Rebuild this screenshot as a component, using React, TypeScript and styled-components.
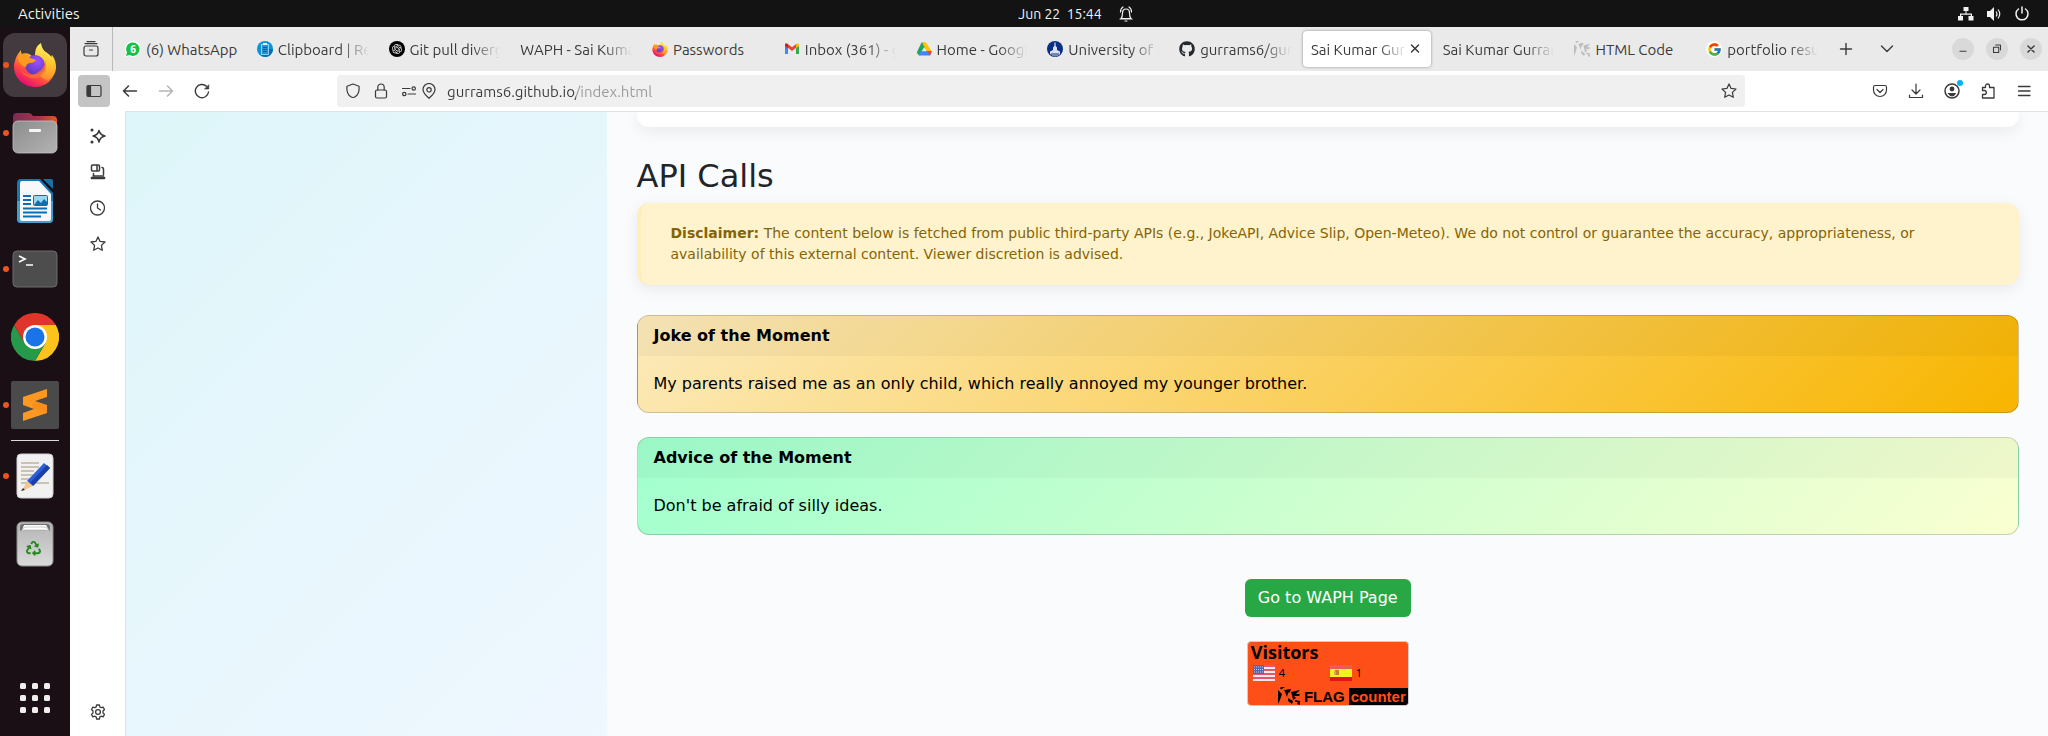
import React from "react";
import styled, { createGlobalStyle, css } from "styled-components";
import { FcGoogle } from "react-icons/fc";
import { FaGithub, FaRecycle } from "react-icons/fa";
import { RiOpenaiFill } from "react-icons/ri";

const uiFont = `"Ubuntu", "Noto Sans", "Open Sans", sans-serif`;
const pageFont = `"DejaVu Sans", sans-serif`;

const GlobalStyle = createGlobalStyle`
  * { box-sizing: border-box; }
  body { margin: 0; background: #ffffff; }
  button { border: 0; padding: 0; background: none; font: inherit; color: inherit; cursor: pointer; }
  svg { display: block; flex: none; }
`;

/* ---------- desktop shell ---------- */

const Desktop = styled.div`
  min-height: 100vh;
  display: flex;
  flex-direction: column;
  font-family: ${uiFont};
  font-size: 15px;
`;

const TopBar = styled.header`
  display: grid;
  grid-template-columns: 1fr auto 1fr;
  align-items: center;
  height: 27px;
  padding: 0 18px;
  background: #131313;
  color: #f2f2f2;
`;

const Clock = styled.button`
  display: flex;
  align-items: center;
  gap: 16px;
  margin-left: 104px;
  font-size: 14px;
  white-space: pre;
`;

const Activities = styled.button`
  justify-self: start;
`;

const Tray = styled.div`
  display: flex;
  justify-content: flex-end;
  align-items: center;
  gap: 12px;
`;

const Workspace = styled.div`
  flex: 1;
  display: flex;
`;

const Dock = styled.nav`
  width: 70px;
  display: flex;
  flex-direction: column;
  gap: 4px;
  padding: 6px 3px;
  background: #1a0f15;
`;

const DockItem = styled.button<{ $active?: boolean; $running?: boolean }>`
  position: relative;
  display: flex;
  align-items: center;
  justify-content: center;
  height: 64px;
  border-radius: 12px;
  background: ${(p) => (p.$active ? "#433a3f" : "transparent")};
  ${(p) =>
    p.$running &&
    css`
      &::before {
        content: "";
        position: absolute;
        left: 0;
        top: 29px;
        width: 6px;
        height: 6px;
        border-radius: 50%;
        background: #e95420;
      }
    `}
`;

const DockRule = styled.hr`
  width: 48px;
  height: 1px;
  margin: -1px auto;
  border: 0;
  background: #dcd9da;
`;

const DockSpacer = styled.div`
  flex: 1;
`;

/* ---------- browser ---------- */

const Browser = styled.div`
  flex: 1;
  min-width: 0;
  display: flex;
  flex-direction: column;
  background: #ffffff;
  color: #3a3a3a;
`;

const TabBar = styled.div`
  display: flex;
  align-items: center;
  height: 44px;
  background: #eaeaea;
`;

const TabOverview = styled.button`
  display: flex;
  align-items: center;
  justify-content: center;
  width: 43px;
  height: 44px;
  border-right: 1px solid #b9b9b9;
`;

const TabList = styled.div`
  flex: 1;
  min-width: 0;
  display: flex;
  gap: 4px;
  padding: 0 4px;
`;

const TabBox = styled.div<{ $active?: boolean }>`
  flex: 1 1 0;
  min-width: 0;
  display: flex;
  align-items: center;
  height: 36px;
  padding: 0 8px;
  border-radius: 4px;
  ${(p) =>
    p.$active &&
    css`
      background: #ffffff;
      box-shadow: 0 0 3px rgba(0, 0, 0, 0.4);
    `}
`;

const TabButton = styled.button<{ $fade?: boolean }>`
  flex: 1;
  min-width: 0;
  display: flex;
  align-items: center;
  gap: 5px;
  white-space: nowrap;
  text-align: left;
  overflow: hidden;
  ${(p) => p.$fade && css`mask-image: linear-gradient(to left, transparent, #000 28px);`}
`;

const WindowControls = styled.div`
  display: flex;
  align-items: center;
  gap: 12px;
  padding-right: 6px;
`;

const TabTools = styled.div`
  display: flex;
  align-items: center;
  gap: 9px;
  margin-right: 49px;
`;

const RoundButton = styled.button`
  display: flex;
  align-items: center;
  justify-content: center;
  width: 22px;
  height: 22px;
  border-radius: 50%;
  background: #d9d9d9;
`;

const IconButton = styled.button<{ $pressed?: boolean }>`
  position: relative;
  display: flex;
  align-items: center;
  justify-content: center;
  width: 32px;
  height: 32px;
  border-radius: 4px;
  background: ${(p) => (p.$pressed ? "#c4c4c4" : "transparent")};

  &:disabled {
    color: #b4b4b4;
  }
`;

const Toolbar = styled.div`
  display: flex;
  align-items: center;
  gap: 4px;
  height: 40px;
  padding: 0 8px;
`;

const AddressBar = styled.form`
  flex: 1;
  display: flex;
  align-items: center;
  height: 32px;
  margin: 0 115px;
  padding: 0 8px;
  border-radius: 4px;
  background: #f0f0f0;
`;

const AddressIcons = styled.div`
  display: flex;
  align-items: center;
  gap: 12px;
  margin-right: 10px;
`;

const PermissionIcons = styled.div`
  display: flex;
  gap: 4px;
`;

const AddressInput = styled.input`
  flex: 1;
  min-width: 0;
  padding: 0;
  border: 0;
  outline: 0;
  font: inherit;
  color: transparent;
  background: linear-gradient(to right, #3a3a3a 129px, #999999 129px);
  background-clip: text;
  -webkit-background-clip: text;
`;

const Badge = styled.span`
  position: absolute;
  top: 5px;
  right: 5px;
  width: 6px;
  height: 6px;
  border-radius: 50%;
  background: #00b3f4;
`;

const BrowserBody = styled.div`
  flex: 1;
  display: flex;
`;

const Sidebar = styled.nav`
  width: 55px;
  display: flex;
  flex-direction: column;
  align-items: center;
  gap: 4px;
  padding: 9px 0 8px 1px;
`;

const SidebarSpacer = styled.div`
  flex: 1;
`;

/* ---------- web page ---------- */

const Page = styled.div`
  flex: 1;
  min-width: 0;
  display: flex;
  overflow: hidden;
  border-top: 1px solid #e0e2e4;
  border-left: 1px solid #e0e2e4;
  background: #fafbfd;
  font-family: ${pageFont};
  font-size: 16px;
  line-height: 24px;
  color: #212529;
`;

const Profile = styled.aside`
  flex: 0 0 25%;
  background: linear-gradient(135deg, #def6f9, #eff7ff);
`;

const Content = styled.main`
  flex: 1;
  min-width: 0;
  padding: 0 29px 30px 30px;
`;

const PanelEnd = styled.section`
  height: 15px;
  margin-bottom: 30px;
  border-radius: 0 0 12px 12px;
  background: #ffffff;
  box-shadow: 0 4px 16px rgba(0, 0, 0, 0.08);
`;

const Heading = styled.h2`
  margin: 0 0 8px;
  font-size: 32px;
  font-weight: 400;
  line-height: 38px;
`;

const Disclaimer = styled.p`
  margin: 0 0 30px;
  padding: 20px 30px;
  border-left: 4px solid #ffeeba;
  border-radius: 12px;
  background: #fff3cd;
  box-shadow: 0 4px 16px rgba(0, 0, 0, 0.08);
  color: #856404;
  font-size: 14px;
  line-height: 21px;
`;

const Card = styled.article<{ $from: string; $to: string }>`
  margin-bottom: 24px;
  border: 1px solid rgba(0, 0, 0, 0.18);
  border-radius: 12px;
  overflow: hidden;
  background: linear-gradient(135deg, ${(p) => p.$from}, ${(p) => p.$to});
  color: #000000;
`;

const CardTitle = styled.h3`
  margin: 0;
  padding: 8px 16px;
  background: rgba(0, 0, 0, 0.03);
  font-size: 16px;
  font-weight: 700;
`;

const CardText = styled.p`
  margin: 0;
  padding: 16px;
`;

const Actions = styled.div`
  display: flex;
  flex-direction: column;
  align-items: center;
  gap: 24px;
  padding-top: 20px;
`;

const PageLink = styled.a`
  padding: 7px 13px;
  border-radius: 6px;
  background: #28a745;
  color: #ffffff;
  text-decoration: none;
`;

const Counter = styled.a`
  display: flex;
  flex-direction: column;
  width: 162px;
  height: 65px;
  border: 1px solid #c9ccd0;
  border-radius: 4px;
  overflow: hidden;
  background: #ff4f19;
  color: #000000;
  text-decoration: none;
  font-family: "Noto Sans", sans-serif;
`;

const CounterTitle = styled.strong`
  padding-left: 3px;
  font-family: "Open Sans", sans-serif;
  font-size: 18px;
  line-height: 20px;
`;

const CounterRow = styled.span`
  display: grid;
  grid-template-columns: 77px 1fr;
  padding: 2px 5px 0;
`;

const Country = styled.span`
  display: flex;
  align-items: center;
  gap: 4px;
  font-size: 11px;
  line-height: 18px;
`;

const CounterBrand = styled.span`
  display: flex;
  align-items: center;
  justify-content: flex-end;
  gap: 4px;
  margin-top: auto;
  font-family: "Liberation Sans", sans-serif;
  font-size: 15px;
  font-weight: 700;
  line-height: 17px;
`;

const CounterWord = styled.span`
  padding: 0 2px;
  background: #000000;
  color: #ff4f19;
`;

/* ---------- icons ---------- */

type IconProps = { children: React.ReactNode; size?: number; width?: number };

const Line = ({ children, size = 16, width = 1.2 }: IconProps) => (
  <svg width={size} height={size} viewBox="0 0 16 16" fill="none" stroke="currentColor" strokeWidth={width} strokeLinecap="round" strokeLinejoin="round" aria-hidden="true">
    {children}
  </svg>
);

const starPath = "M8 .9l2.1 4.5 4.9.6-3.6 3.4.9 4.9L8 12l-4.3 2.3.9-4.9L1 6l4.9-.6z";

const FirefoxIcon = ({ size, id }: { size: number; id: string }) => (
  <svg width={size} height={size} viewBox="0 0 42 44" aria-hidden="true">
    <defs>
      <linearGradient id={`${id}a`} x1=".85" y1=".1" x2=".25" y2="1">
        <stop offset="0" stopColor="#fff44f" />
        <stop offset=".35" stopColor="#ffa62a" />
        <stop offset=".65" stopColor="#ff4a41" />
        <stop offset="1" stopColor="#e2007e" />
      </linearGradient>
      <linearGradient id={`${id}b`} x1=".6" y1="0" x2=".5" y2="1">
        <stop offset="0" stopColor="#fff36a" />
        <stop offset=".55" stopColor="#ffc52c" />
        <stop offset="1" stopColor="#ff8a2c" />
      </linearGradient>
      <radialGradient id={`${id}c`} cx=".6" cy=".3" r=".8">
        <stop offset="0" stopColor="#9a52ff" />
        <stop offset="1" stopColor="#5b35b5" />
      </radialGradient>
    </defs>
    <path d="M1 18C2 13 4 11 7 7c0 2 0 3 1 4 2-1 5-1 7 0 2 1 4 3 5 3l10-6c6 3 11 9 11 17 0 11-9 19-20 19S0 35 0 24c0-2 0-4 1-6z" fill={`url(#${id}a)`} />
    <path d="M21 14c0-7 1-11 6-14 1 7 5 9 8 13 0 2 1 3 3 4-1-2-1-4 0-5 3 4 4 8 4 12 0 6-3 10-8 13-8-1-13-9-13-23z" fill={`url(#${id}b)`} />
    <circle cx="21" cy="22" r="10" fill={`url(#${id}c)`} />
    <path d="M31 17c3 8-1 16-9 18-6 1-12-2-15-7 4 4 11 5 16 2s8-7 8-13z" fill="#ff6a35" opacity=".8" />
    <path d="M8 11c3-1 6 0 8 4l6 2c-1 2-3 3-6 3-2 0-4 2-4 4-4-1-7-4-8-8 0-3 2-5 4-5z" fill="#ff9a1f" />
  </svg>
);

const FilesIcon = () => (
  <svg width="46" height="42" viewBox="0 0 46 42" aria-hidden="true">
    <defs>
      <linearGradient id="filesTop"><stop offset="0" stopColor="#7c2a55" /><stop offset=".6" stopColor="#a5364b" /><stop offset="1" stopColor="#e95420" /></linearGradient>
      <linearGradient id="filesBody" x2="1" y2="1"><stop offset="0" stopColor="#8c8c8c" /><stop offset="1" stopColor="#b3b3b3" /></linearGradient>
    </defs>
    <path d="M1 5q0-4 4-4h12q2 0 4 3h20q4 0 4 4v12H1z" fill="url(#filesTop)" />
    <rect x="1" y="9" width="44" height="32" rx="5" fill="url(#filesBody)" stroke="#c4c4c4" strokeWidth=".8" />
    <rect x="17" y="17" width="12" height="3" rx="1" fill="#f6f6f6" />
  </svg>
);

const WriterIcon = () => (
  <svg width="38" height="46" viewBox="0 0 38 46" aria-hidden="true">
    <path d="M5 1h19l13 14v26q0 4-4 4H5q-4 0-4-4V5q0-4 4-4z" fill="#1378b5" />
    <path d="M1 23h36v18q0 4-4 4H5q-4 0-4-4z" fill="#3f9fd0" />
    <path d="M6 3h17l12 13v25q0 2-2 2H6q-2 0-2-2V5q0-2 2-2z" fill="#f8f8f8" />
    <path d="M27 1h8q2 0 2 2v8z" fill="#1a6fa3" />
    <path d="M7 18h8M7 22h8M7 26h8M7 30.500h24M7 34.500h24M7 38.500h18" stroke="#0a6fb5" strokeWidth="2" />
    <rect x="17.500" y="17.500" width="14" height="10" rx="1" fill="#9fd3f2" stroke="#0a6fb5" />
    <path d="M18 27l4-5 3 3 3-4 3 3v3z" fill="#0a6fb5" />
  </svg>
);

const TerminalIcon = () => (
  <svg width="46" height="38" viewBox="0 0 46 38" aria-hidden="true">
    <rect x="1" y="1" width="44" height="36" rx="4" fill="#4d4d4d" stroke="#6c6c6c" />
    <path d="M7 6l6 3-6 3M14 15h7" stroke="#fff" strokeWidth="1.700" fill="none" />
  </svg>
);

const ChromeIcon = () => (
  <svg width="48" height="48" viewBox="0 0 48 48" aria-hidden="true">
    <path d="M24 24L3.200 12A24 24 0 0 1 44.800 12z" fill="#e0352b" />
    <path d="M24 12h20.800A24 24 0 0 1 24 48L34.400 30z" fill="#fcc41a" />
    <path d="M3.200 12A24 24 0 0 0 24 48l10.400-18L13.600 30z" fill="#27994a" />
    <path d="M3.200 12L13.600 30 24 24V12z" fill="#e0352b" />
    <circle cx="24" cy="24" r="12" fill="#fff" />
    <circle cx="24" cy="24" r="9.500" fill="#1a73e8" />
  </svg>
);

const SublimeIcon = () => (
  <svg width="48" height="48" viewBox="0 0 48 48" aria-hidden="true">
    <rect width="48" height="48" rx="2" fill="#4a4a4a" />
    <path d="M12 16l24-8v8l-12 4 12 4v8L12 40v-8l11-4-11-4z" fill="#ff9820" />
    <path d="M23 28l13 3v-6l-12-5-3 5z" fill="#e97f10" opacity=".35" />
  </svg>
);

const EditorIcon = () => (
  <svg width="38" height="46" viewBox="0 0 38 46" aria-hidden="true">
    <rect x="1" y="1" width="36" height="44" rx="4" fill="#f1f1f1" stroke="#cfcfcf" />
    <path d="M5 10h18M5 14h18M5 18h13M5 22h12M5 26h12M5 30h28" stroke="#c9c3b4" strokeWidth="2" />
    <path d="M28 10l6 5-17 18-6-5z" fill="#2b5fd9" />
    <path d="M31 12l3 3-17 18-3-3z" fill="#1b3fa8" />
    <path d="M11 28l6 5-11 5z" fill="#f5c58b" />
    <path d="M7 35l2 2-4 1z" fill="#333" />
  </svg>
);

const TrashIcon = () => (
  <svg width="38" height="46" viewBox="0 0 38 46" aria-hidden="true">
    <defs>
      <linearGradient id="trashBody" x2="0" y2="1"><stop offset="0" stopColor="#b4b4b4" /><stop offset="1" stopColor="#dadada" /></linearGradient>
    </defs>
    <rect x="1" y="1" width="36" height="44" rx="5" fill="url(#trashBody)" stroke="#8b908b" />
    <path d="M4 10V6q0-3 3-3h24q3 0 3 3v4l-2-1q-1-2-3-2H9Q7 7 6 9z" fill="#6f6f6f" />
    <path d="M6 9l2-5h22l3 5-3-2H9z" fill="#fdfdfd" />
    <path d="M6 10q1-4 4-4h18q4 0 5 4-2-1-4-1H10q-2 0-4 1z" fill="#ffffff" stroke="#9a9a9a" strokeWidth=".5" />
    <FaRecycle x="10" y="20" width="18" height="18" color="#23891c" />
  </svg>
);

const GridIcon = () => (
  <svg width="30" height="30" viewBox="0 0 30 30" fill="#f0efee" aria-hidden="true">
    {[0, 12, 24].map((y) => [0, 12, 24].map((x) => <rect key={`${x}-${y}`} x={x} y={y} width="6" height="6" rx="1.500" />))}
  </svg>
);

const WhatsAppIcon = () => (
  <svg width="16" height="16" viewBox="0 0 16 16" aria-hidden="true">
    <path d="M0 16l1-4A8 8 0 1 1 4 15z" fill="#fff" />
    <path d="M1 15l1-3.500A6.700 6.700 0 1 1 4.500 14z" fill="#15c245" />
    <text x="8" y="11.500" textAnchor="middle" fontFamily="Noto Sans" fontWeight="700" fontSize="10" fill="#fff">6</text>
  </svg>
);

const ClipboardIcon = () => (
  <svg width="16" height="16" viewBox="0 0 16 16" aria-hidden="true">
    <circle cx="8" cy="8" r="8" fill="#0a94dc" />
    <path d="M8 16a8 8 0 0 0 8-8h-4l-8 6q2 2 4 2z" fill="#0a6bb8" />
    <rect x="4.500" y="3.500" width="7" height="10" fill="#2a93cd" stroke="#a9e2fa" strokeWidth=".8" />
    <path d="M6 2h4v2H6z" fill="#d5f2fd" />
    <path d="M6 6.500h4M6 8.500h4M6 10.500h4" stroke="#0b5f9e" />
  </svg>
);

const OpenAiTile = styled.span`
  display: flex;
  flex: none;
  align-items: center;
  justify-content: center;
  width: 16px;
  height: 16px;
  border-radius: 50%;
  background: #000000;
  color: #ffffff;
`;

const GmailIcon = () => (
  <svg width="16" height="16" viewBox="0 0 16 16" aria-hidden="true">
    <path d="M1 4v9h3V7z" fill="#4285f4" />
    <path d="M12 7v6h3V4z" fill="#34a853" />
    <path d="M1 4.500V4q0-2 2.500-1.200L8 6.300l4.500-3.500L15 4v.5L8 10z" fill="#ea4335" />
    <path d="M12 3.200Q15 1.500 15 4v1l-3 2.200z" fill="#fbbc04" />
    <path d="M1 4v1l3 2.300V3.200Q1 1.500 1 4z" fill="#c5221f" />
  </svg>
);

const DriveIcon = () => (
  <svg width="16" height="16" viewBox="0 0 16 16" aria-hidden="true">
    <path d="M5.500 1.500h2.700L10 5 4 14.500 1.500 13q-1-1.500 0-3z" fill="#1ea362" />
    <path d="M6 1.500h4L15.500 10h-5z" fill="#ffc107" />
    <path d="M5 10h10.500q0 2.500-1.500 4.500H2.500z" fill="#4285f4" />
    <path d="M11 10h4.500q0 2.500-1.500 4.500z" fill="#ea4335" />
    <path d="M8 6.200l2.300 4H5.700z" fill="#eaeaea" />
  </svg>
);

const UniversityIcon = () => (
  <svg width="16" height="16" viewBox="0 0 16 16" aria-hidden="true">
    <circle cx="8" cy="8" r="8" fill="#0b2f86" />
    <path d="M8 1.500v4" stroke="#fff" />
    <path d="M6 9V6.500L8 4.500l2 2V9l3 1.500V13l-1.500 1.500V12h-1v3h-1v-3h-1v3.500h-1V12h-1v3h-1v-3h-1v2L3 13v-2.500z" fill="#fff" opacity=".85" />
  </svg>
);

const CounterMark = ({ color, width, height }: { color: string; width: number; height: number }) => (
  <svg width={width} height={height} viewBox="0 0 22 18" fill={color} preserveAspectRatio="none" aria-hidden="true">
    <path d="M0 3l4 4-2 6-2 4zM2 1q2-2 5-1L3 2.500z" />
    <path d="M6 3l7-1-1 3-2 1-1 4-2-5zM13 5l9-2-4 4h4l-1 2h-5l2 2-3 2-1-5zM10 11l5 3-1 3-4-3zM17 13l5 1v4l-3-1 1-2h-3z" />
  </svg>
);

const FlagUS = () => (
  <svg width="22" height="16" viewBox="0 0 22 16" role="img" aria-label="United States">
    <rect width="22" height="16" fill="#f7e7ea" />
    <path d="M0 1h22M0 5h22M0 9h22M0 13h22" stroke="#e0586c" strokeWidth="2" />
    <rect width="11" height="9" fill="#5a63ad" />
    <path d="M1 2h10M1 4.500h10M1 7h10" stroke="#c9cbe6" strokeDasharray="1 1" />
  </svg>
);

const FlagES = () => (
  <svg width="22" height="16" viewBox="0 0 22 16" role="img" aria-label="Spain">
    <rect width="22" height="16" fill="#e3131b" />
    <rect width="22" height="4" fill="#ee5a5c" />
    <rect y="4" width="22" height="8" fill="#fbee23" />
    <path d="M5 5h4v5H5z" fill="#c77a3a" />
    <path d="M4 6h2v4H4z" fill="#d8a55a" />
  </svg>
);

const GoogleMark = () => (
  <svg width="16" height="16" viewBox="0 0 16 16" aria-hidden="true">
    <circle cx="8" cy="8" r="8" fill="#fff" />
    <FcGoogle x="1" y="1" width="14" height="14" />
  </svg>
);

/* ---------- data ---------- */

type TabData = { title: string; icon?: React.ReactNode; active?: boolean; fade?: boolean };

const tabs: TabData[] = [
  { title: "(6) WhatsApp", icon: <WhatsAppIcon /> },
  { title: "Clipboard | Re", icon: <ClipboardIcon />, fade: true },
  { title: "Git pull diverg", icon: <OpenAiTile><RiOpenaiFill size={12} /></OpenAiTile>, fade: true },
  { title: "WAPH - Sai Kuma", fade: true },
  { title: "Passwords", icon: <FirefoxIcon size={16} id="tabFox" /> },
  { title: "Inbox (361) - g", icon: <GmailIcon />, fade: true },
  { title: "Home - Googl", icon: <DriveIcon />, fade: true },
  { title: "University of l", icon: <UniversityIcon />, fade: true },
  { title: "gurrams6/gur", icon: <FaGithub size={16} color="#24292f" />, fade: true },
  { title: "Sai Kumar Gurr", active: true, fade: true },
  { title: "Sai Kumar Gurram", fade: true },
  { title: "HTML Code", icon: <CounterMark color="#bdbdbd" width={16} height={16} /> },
  { title: "portfolio resu", icon: <GoogleMark />, fade: true },
];

const cards = [
  { title: "Joke of the Moment", text: "My parents raised me as an only child, which really annoyed my younger brother.", from: "#fceabb", to: "#f8b500" },
  { title: "Advice of the Moment", text: "Don't be afraid of silly ideas.", from: "#a1ffce", to: "#faffd1" },
];

/* ---------- app ---------- */

export default function App() {
  return (
    <Desktop>
      <GlobalStyle />
      <TopBar>
        <Activities>Activities</Activities>
        <Clock>
          <span>Jun 22{"  "}15:44</span>
          <Line>
            <path d="M3 12.500Q4.500 11 4.500 7t3.500-4q3.500 0 3.500 4t1.500 5.500zM2 13h12M7 15h2M2.500 6Q2.500 2.500 5 1M13.500 6Q13.500 2.500 11 1" />
          </Line>
        </Clock>
        <Tray>
          <svg width="16" height="14" viewBox="0 0 16 14" fill="#f2f2f2" aria-label="Network">
            <path d="M5.500 0h5v4h-2v2.500H14V9h1.500v4.500h-5V9H12.800V7.700H3.200V9H5v4.500H0V9h2V6.500h5.500V4h-2z" />
          </svg>
          <svg width="16" height="14" viewBox="0 0 16 14" fill="#f2f2f2" aria-label="Volume">
            <path d="M1 4h3l4-4v14l-4-4H1z" />
            <path d="M10 4.500q2 2.500 0 5M12 2.500q3.500 4.500 0 9" fill="none" stroke="#f2f2f2" strokeWidth="1.200" />
          </svg>
          <Line size={16} width={1.500}><path d="M8 1v6M4.500 3A6 6 0 1 0 11.500 3" /></Line>
        </Tray>
      </TopBar>

      <Workspace>
        <Dock aria-label="Dock">
          <DockItem $active $running aria-label="Firefox"><FirefoxIcon size={44} id="dockFox" /></DockItem>
          <DockItem $running aria-label="Files"><FilesIcon /></DockItem>
          <DockItem aria-label="Writer"><WriterIcon /></DockItem>
          <DockItem $running aria-label="Terminal"><TerminalIcon /></DockItem>
          <DockItem aria-label="Chrome"><ChromeIcon /></DockItem>
          <DockItem $running aria-label="Sublime Text"><SublimeIcon /></DockItem>
          <DockRule />
          <DockItem $running aria-label="Text Editor"><EditorIcon /></DockItem>
          <DockItem aria-label="Trash"><TrashIcon /></DockItem>
          <DockSpacer />
          <DockItem aria-label="Show Applications"><GridIcon /></DockItem>
        </Dock>

        <Browser>
          <TabBar>
            <TabOverview aria-label="Recent browsing">
              <Line><rect x="1" y="5" width="14" height="10" rx="2" /><path d="M2 2.700h12M4 .6h8M6.500 9h3" /></Line>
            </TabOverview>
            <TabList role="tablist">
              {tabs.map((tab) => (
                <TabBox key={tab.title} $active={tab.active}>
                  <TabButton role="tab" aria-selected={!!tab.active} $fade={tab.fade}>
                    {tab.icon}
                    <span>{tab.title}</span>
                  </TabButton>
                  {tab.active && (
                    <button aria-label="Close tab">
                      <Line width={1.500}><path d="M4.500 4l7 7M11.500 4l-7 7" /></Line>
                    </button>
                  )}
                </TabBox>
              ))}
            </TabList>
            <TabTools>
              <IconButton aria-label="New tab"><Line width={1.400}><path d="M8 2.500v11M2.500 8h11" /></Line></IconButton>
              <IconButton aria-label="List all tabs"><Line width={1.400}><path d="M2.500 5L8 10.500 13.500 5" /></Line></IconButton>
            </TabTools>
            <WindowControls>
              <RoundButton aria-label="Minimize"><Line size={14}><path d="M4.500 10.500h7" /></Line></RoundButton>
              <RoundButton aria-label="Restore"><Line size={14}><path d="M4 6h6v6H4zM6.500 3.500H12V9" /></Line></RoundButton>
              <RoundButton aria-label="Close"><Line size={14} width={1.700}><path d="M4.500 4.500l7 7M11.500 4.500l-7 7" /></Line></RoundButton>
            </WindowControls>
          </TabBar>

          <Toolbar>
            <IconButton $pressed aria-label="Toggle sidebar">
              <Line><rect x="1" y="2.500" width="14" height="11" rx="1.500" /><path d="M1.500 3h3v10h-3z" fill="currentColor" /></Line>
            </IconButton>
            <IconButton aria-label="Back"><Line width={1.500}><path d="M14.500 8h-13M6.500 3l-5 5 5 5" /></Line></IconButton>
            <IconButton aria-label="Forward" disabled><Line width={1.500}><path d="M1.500 8h13M9.500 3l5 5-5 5" /></Line></IconButton>
            <IconButton aria-label="Reload">
              <Line width={1.400}><path d="M14.500 9A6.600 6.600 0 1 1 12.500 3.300" /><path d="M14.800 2v4h-4z" fill="currentColor" strokeWidth=".6" /></Line>
            </IconButton>
            <AddressBar onSubmit={(e) => e.preventDefault()}>
              <AddressIcons>
                <Line><path d="M8 1l6 2.300q.8 7-3.500 10.200Q8 15.500 5.500 13.500 1.200 10.300 2 3.300z" /></Line>
                <Line><rect x="2.500" y="7" width="11" height="8" rx="1.500" /><path d="M4.800 7V4.200a3.200 3.200 0 0 1 6.400 0V7" /></Line>
                <PermissionIcons>
                  <Line><path d="M1.500 5.500h7.500M7 11h7.500" /><circle cx="12.700" cy="5.500" r="1.700" /><circle cx="3.300" cy="11" r="1.700" /></Line>
                  <Line><path d="M8 15.300Q2 10 2 6.500a6 6 0 0 1 12 0Q14 10 8 15.300z" /><circle cx="8" cy="6.800" r="2.200" /></Line>
                </PermissionIcons>
              </AddressIcons>
              <AddressInput aria-label="Address" defaultValue="gurrams6.github.io/index.html" />
              <button type="button" aria-label="Bookmark this page"><Line><path d={starPath} /></Line></button>
            </AddressBar>
            <IconButton aria-label="Pocket">
              <Line><path d="M1.500 4q0-1.500 1.500-1.500h10q1.500 0 1.500 1.500v3a6.500 6.500 0 0 1-13 0zM5 6.500l3 3 3-3" /></Line>
            </IconButton>
            <IconButton aria-label="Downloads">
              <Line><path d="M8 1v9.500M4 7l4 4 4-4M1.500 12v2.500h13V12" /></Line>
            </IconButton>
            <IconButton aria-label="Account">
              <Line width={1.500}><circle cx="8" cy="8" r="7" /><circle cx="8" cy="6" r="1.700" fill="currentColor" /><path d="M4.500 10.500h7Q10.500 13 8 13t-3.500-2.500z" fill="currentColor" strokeWidth="1" /></Line>
              <Badge />
            </IconButton>
            <IconButton aria-label="Extensions">
              <Line width={1.300}><path d="M5.500 4.500V3a2 2 0 0 1 4 0v1.500h4.500v10.500H2.500V11.500H4.300a2 2 0 0 0 0-4H2.500V4.500z" /></Line>
            </IconButton>
            <IconButton aria-label="Menu"><Line width={1.300}><path d="M2.500 3.500h11.500M2.500 8h11.500M2.500 12.500h11.500" /></Line></IconButton>
          </Toolbar>

          <BrowserBody>
            <Sidebar aria-label="Sidebar">
              <IconButton aria-label="AI chatbot">
                <Line width={1.500}><path d="M9 2.500q1 4.500 6 5.500-5 1-6 6-1-5-6-6 5-1 6-5.500z" /><circle cx="2" cy="2" r=".8" fill="currentColor" /><circle cx="2" cy="14" r=".8" fill="currentColor" /></Line>
              </IconButton>
              <IconButton aria-label="Synced tabs">
                <Line width={1.500}><rect x="1.500" y="1" width="8" height="6" rx="1" /><path d="M7 1.500v5M12 3.500q1.500 0 1.500 2v5M3.500 9.500v2M3 12h10.500" /><path d="M1.500 13.500h13v1h-13z" fill="currentColor" /></Line>
              </IconButton>
              <IconButton aria-label="History"><Line width={1.300}><circle cx="7.500" cy="8" r="7" /><path d="M7.500 4v4l3 2" /></Line></IconButton>
              <IconButton aria-label="Bookmarks"><Line width={1.300}><path d={starPath} /></Line></IconButton>
              <SidebarSpacer />
              <IconButton aria-label="Customize sidebar">
                <Line width={1.300}>
                  <path d="M6.600 1h2.800l.5 2 1.200.7 2-.6 1.400 2.400-1.500 1.500v1.900l1.500 1.500-1.400 2.400-2-.6-1.200.7-.5 2.100H6.600l-.5-2.100-1.200-.7-2 .6-1.400-2.400L3 8.900V7L1.500 5.500l1.400-2.400 2 .6L6.100 3z" />
                  <circle cx="8" cy="8" r="2.400" />
                </Line>
              </IconButton>
            </Sidebar>

            <Page>
              <Profile />
              <Content>
                <PanelEnd />
                <Heading>API Calls</Heading>
                <Disclaimer>
                  <strong>Disclaimer:</strong> The content below is fetched from public third-party APIs (e.g., JokeAPI, Advice Slip,
                  Open-Meteo). We do not control or guarantee the accuracy, appropriateness, or availability of this external
                  content. Viewer discretion is advised.
                </Disclaimer>
                {cards.map((card) => (
                  <Card key={card.title} $from={card.from} $to={card.to}>
                    <CardTitle>{card.title}</CardTitle>
                    <CardText>{card.text}</CardText>
                  </Card>
                ))}
                <Actions>
                  <PageLink href="#waph">Go to WAPH Page</PageLink>
                  <Counter href="#visitors">
                    <CounterTitle>Visitors</CounterTitle>
                    <CounterRow>
                      <Country><FlagUS />4</Country>
                      <Country><FlagES />1</Country>
                    </CounterRow>
                    <CounterBrand>
                      <CounterMark color="#000000" width={22} height={18} />
                      FLAG
                      <CounterWord>counter</CounterWord>
                    </CounterBrand>
                  </Counter>
                </Actions>
              </Content>
            </Page>
          </BrowserBody>
        </Browser>
      </Workspace>
    </Desktop>
  );
}
